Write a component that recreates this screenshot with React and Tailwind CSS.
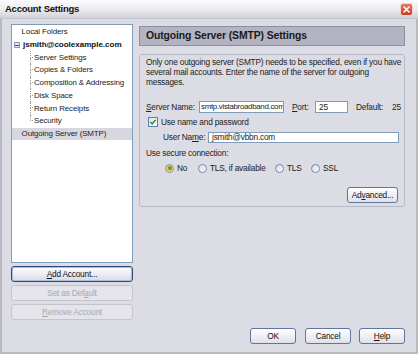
import React from 'react'

const U = ({ children }) => <span className="underline">{children}</span>

function XpButton({ children, className = '', disabled = false, focused = false }) {
    const look = disabled
        ? 'border-[#c4c4cc] text-[#a9a9b2] bg-[#e4e4ea]'
        : focused
            ? 'border-[#2d4a7c] text-[#111] bg-linear-to-b from-white to-[#dadae6] shadow-[inset_0_0_0_1px_#a9bde0]'
            : 'border-[#5d75a1] text-[#111] bg-linear-to-b from-white to-[#e0e0e9]'
    return (
        <div className={`flex items-center justify-center rounded-[3px] border ${look} ${className}`}>
            {children}
        </div>
    )
}

function Radio({ checked = false, label, className = '' }) {
    return (
        <div className={`flex items-center gap-[3px] ${className}`}>
            <span className="flex h-[9px] w-[9px] items-center justify-center rounded-full border border-[#6f8db8] bg-linear-to-br from-[#d6d6de] to-white">
                {checked && (
                    <span className="flex h-[7px] w-[7px] items-center justify-center rounded-full bg-[#f2c14e]">
                        <span className="h-[4px] w-[4px] rounded-full bg-[#4ea12a]" />
                    </span>
                )}
            </span>
            <span>{label}</span>
        </div>
    )
}

function TreeChild({ label, last = false }) {
    return (
        <div className="flex h-[12.7px] items-stretch pl-[18px]">
            <span className="flex w-[3px] flex-col">
                <span className="h-1/2 border-b border-l border-dotted border-[#9a9aa2]" />
                <span className={last ? 'h-1/2' : 'h-1/2 border-l border-dotted border-[#9a9aa2]'} />
            </span>
            <span className="flex items-center pl-[1px]">{label}</span>
        </div>
    )
}

const CHILDREN = [
    'Server Settings',
    'Copies & Folders',
    'Composition & Addressing',
    'Disk Space',
    'Return Receipts',
    'Security',
]

export default function App() {
    return (
        <div className="flex h-[354px] w-[418px] flex-col overflow-hidden bg-[#dcdce4] font-['Liberation_Sans',Arial,sans-serif] text-[8.3px] tracking-[-0.2px] text-[#222]">
            {/* Title bar */}
            <div className="flex h-[19px] shrink-0 items-center justify-between border-b border-[#c4c4ce] bg-linear-to-b from-[#fcfcfe] via-[#ececf1] to-[#d2d2db] pl-[5px] pr-[5px]">
                <span className="text-[9.5px] font-bold tracking-[-0.25px] text-[#111]">Account Settings</span>
                <span className="flex h-[13px] w-[13px] items-center justify-center rounded-[3px] border border-[#f3d2cb] bg-linear-to-b from-[#e8795d] to-[#c43a22]">
                    <svg width="7" height="7" viewBox="0 0 7 7">
                        <path d="M1 1L6 6M6 1L1 6" stroke="white" strokeWidth="1.6" strokeLinecap="round" />
                    </svg>
                </span>
            </div>

            {/* Body */}
            <div className="flex flex-1 gap-[6px] border-x-2 border-b-2 border-[#b9b9c4] pb-[8px] pl-[9px]">
                {/* Left column */}
                <div className="flex w-[122px] flex-col">
                    <div className="mt-[5px] h-[239px] border border-[#7f9db9] bg-white pt-[1px] text-[7.9px] tracking-[-0.1px]">
                        <div className="flex h-[12.7px] items-center pl-[9.6px]">Local Folders</div>
                        <div className="flex h-[12.7px] items-center pl-[2px]">
                            <span className="flex h-[6px] w-[6px] items-center justify-center border border-[#8b9cc0] bg-[#e6e6f4]">
                                <span className="h-[1px] w-[4px] bg-[#3c4a80]" />
                            </span>
                            <span className="pl-[3px] text-[8.1px] font-bold tracking-[-0.05px] text-[#111]">jsmith@coolexample.com</span>
                        </div>
                        {CHILDREN.map((c, i) => (
                            <TreeChild key={c} label={c} last={i === CHILDREN.length - 1} />
                        ))}
                        <div className="flex h-[12.7px] items-center bg-[#d7d7df] pl-[9.6px]">Outgoing Server (SMTP)</div>
                    </div>
                    <XpButton focused className="mt-[3px] h-[16px]">
                        <span><U>A</U>dd Account...</span>
                    </XpButton>
                    <XpButton disabled className="mt-[3px] h-[16px]">
                        <span>Set as Def<U>a</U>ult</span>
                    </XpButton>
                    <XpButton disabled className="mt-[3px] h-[16px]">
                        <span><U>R</U>emove Account</span>
                    </XpButton>
                </div>

                {/* Right column */}
                <div className="flex w-[266px] flex-col">
                    <div className="mt-[7px] flex h-[20px] items-center border border-[#8e8e9c] bg-[#b3b3c1] pl-[6px] text-[10.4px] font-bold tracking-[-0.1px] text-[#1a1a1a]">
                        Outgoing Server (SMTP) Settings
                    </div>

                    <div className="mt-[8px] flex h-[153px] flex-col rounded-[3px] border border-[#babac6] pl-[6px]">
                        <p className="mt-[2px] whitespace-nowrap leading-[10px]">
                            Only one outgoing server (SMTP) needs to be specified, even if you have<br />
                            several mail accounts. Enter the name of the server for outgoing<br />
                            messages.
                        </p>

                        <div className="mt-[14px] flex h-[12px] items-center">
                            <span className="w-[53px]"><U>S</U>erver Name:</span>
                            <div className="flex h-[12px] w-[85px] items-center overflow-hidden whitespace-nowrap border border-[#7f9db9] bg-white pl-[1px] text-[7.9px] tracking-[-0.3px]">
                                smtp.vistabroadband.com
                            </div>
                            <span className="ml-[8px] w-[23px]"><U>P</U>ort:</span>
                            <div className="flex h-[12px] w-[33px] items-center border border-[#7f9db9] bg-white pl-[3px]">25</div>
                            <span className="ml-[8px] w-[36px]">Default:</span>
                            <span>25</span>
                        </div>

                        <div className="mt-[4px] flex h-[10px] items-center pl-[2px]">
                            <span className="flex h-[10px] w-[10px] items-center justify-center border border-[#5a7fb0] bg-linear-to-br from-[#e0e0e6] to-white">
                                <svg width="8" height="8" viewBox="0 0 8 8">
                                    <path d="M1.3 4L3.2 5.9L6.8 1.8" fill="none" stroke="#2f9b2a" strokeWidth="1.6" />
                                </svg>
                            </span>
                            <span className="pl-[3px]">Use name and password</span>
                        </div>

                        <div className="mt-[5px] flex h-[11px] items-center pl-[17px]">
                            <span className="w-[45px]">User Na<U>m</U>e:</span>
                            <div className="flex h-[11px] w-[191px] items-center border border-[#7f9db9] bg-white pl-[3px]">
                                jsmith@vbbn.com
                            </div>
                        </div>

                        <div className="mt-[5px] flex h-[10px] items-center">Use secure connection:</div>

                        <div className="mt-[5px] flex h-[10px] items-center pl-[19px]">
                            <Radio checked label="No" className="w-[33px]" />
                            <Radio label="TLS, if available" className="w-[77px]" />
                            <Radio label="TLS" className="w-[36px]" />
                            <Radio label="SSL" />
                        </div>

                        <XpButton className="mr-[6px] mt-[14px] h-[16px] w-[51px] self-end">
                            <span>Ad<U>v</U>anced...</span>
                        </XpButton>
                    </div>

                    <div className="mt-auto flex h-[16px] justify-end">
                        <XpButton className="w-[46px]">OK</XpButton>
                        <XpButton className="ml-[9px] w-[46px]">Cancel</XpButton>
                        <XpButton className="ml-[8px] w-[46px]"><span><U>H</U>elp</span></XpButton>
                    </div>
                </div>
            </div>
        </div>
    )
}
